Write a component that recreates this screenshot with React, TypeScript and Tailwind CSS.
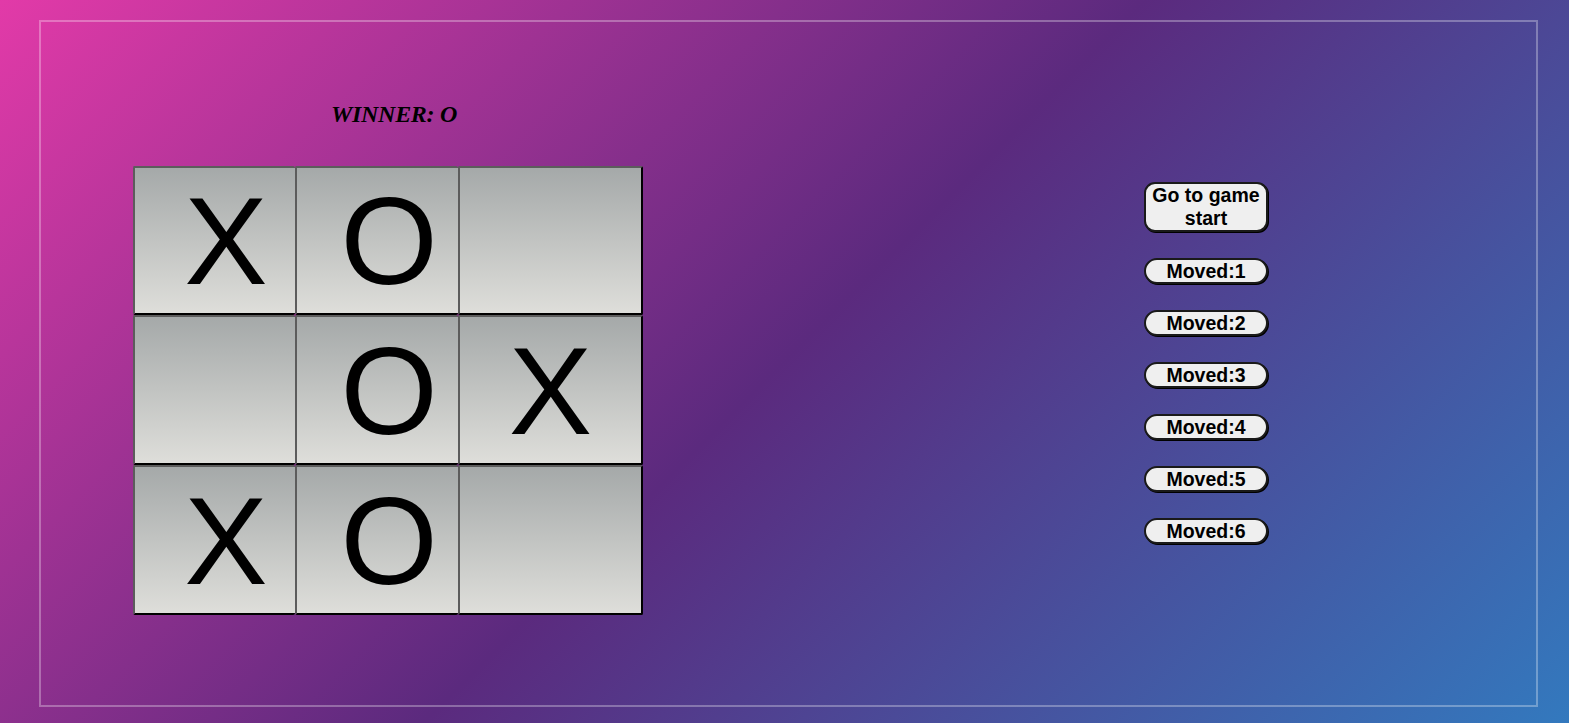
import React from 'react';

type Cell = 'X' | 'O' | null;

const board: Cell[][] = [
  ['X', 'O', null],
  [null, 'O', 'X'],
  ['X', 'O', null],
];

// column widths and glyph offsets as measured
const colClass = [
  'w-[162px] pl-[22px]',
  'w-[163px] pl-[23px]',
  'w-[185px] border-r-2 border-r-black',
];

const moves = ['Go to game start', 'Moved:1', 'Moved:2', 'Moved:3', 'Moved:4', 'Moved:5', 'Moved:6'];

export default function App() {
  return (
    <div className="w-full h-[723px] overflow-hidden pt-[20px] pl-[39px] bg-[linear-gradient(135deg,#e23aa8_0%,#5b2a7e_50%,#3379be_100%)]">
      <div className="flex w-[1499px] h-[687px] border-2 border-white/30">
        {/* game column */}
        <div className="pl-[92px] pt-[78px]">
          <div className="pl-[198px] text-[24px] leading-[28px] font-bold italic tracking-[-0.3px] text-black font-['Liberation_Serif',serif]">
            WINNER: O
          </div>
          <div className="mt-[38px] flex flex-col">
            {board.map((row, r) => (
              <div key={r} className={`flex ${r === 0 ? 'h-[149px]' : 'h-[150px]'}`}>
                {row.map((cell, c) => (
                  <div
                    key={c}
                    className={`${colClass[c]} h-full flex items-center justify-center border-t-2 border-l-2 border-b-2 border-t-[#5c5c5c] border-l-[#5c5c5c] border-b-black rounded-[2px] bg-[linear-gradient(to_bottom,#a5a9a9,#dededa)] text-[125px] leading-none text-black font-['Liberation_Sans',Arial,sans-serif]`}
                  >
                    {cell}
                  </div>
                ))}
              </div>
            ))}
          </div>
        </div>

        {/* history column */}
        <ol className="ml-[501px] pt-[160px] flex flex-col gap-[26px]">
          {moves.map((m, i) => (
            <li key={m}>
              <button
                className={`w-[124px] px-1 bg-[#efefef] border-2 border-[#1a1a1a] shadow-[1px_1px_0_#000] text-[19.5px] font-bold text-black font-['Liberation_Sans',Arial,sans-serif] ${i === 0 ? 'leading-[23px] rounded-[11px]' : 'leading-[22px] rounded-[13px]'}`}
              >
                {m}
              </button>
            </li>
          ))}
        </ol>
      </div>
    </div>
  );
}
